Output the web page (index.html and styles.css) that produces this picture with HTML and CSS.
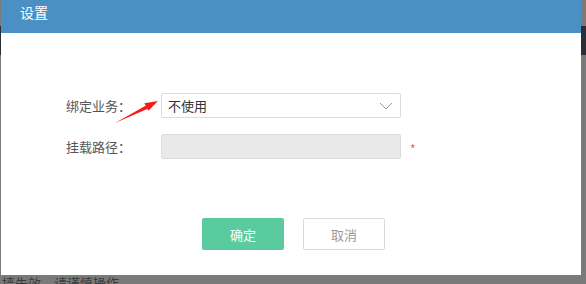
FILE: index.html
```html
<!DOCTYPE html>
<html lang="zh-CN">
<head>
    <meta charset="UTF-8">
    <title>设置</title>
    <link rel="stylesheet" href="styles.css">
</head>
<body>
    <!-- page behind the modal -->
    <div class="page">
        <div class="page-bar"></div>
        <p class="page-note">墙失效，请谨慎操作</p>
    </div>

    <div class="modal">
        <div class="modal-header">设置</div>
        <div class="modal-body">
            <div class="form-row">
                <label class="form-label">绑定业务：</label>
                <div class="select-box">
                    <span>不使用</span>
                    <svg class="chevron" width="14" height="8" viewBox="0 0 14 8">
                        <path d="M1 1 L7 7 L13 1" fill="none" stroke="#999" stroke-width="1"/>
                    </svg>
                </div>
                <svg class="arrow" width="50" height="30" viewBox="0 0 50 30">
                    <polygon points="3,26 34,8.6 35.8,11.8" fill="#f01e1e"/>
                    <polygon points="46,4 32.4,6.2 36.4,13.8" fill="#f01e1e"/>
                </svg>
            </div>
            <div class="form-row">
                <label class="form-label">挂载路径：</label>
                <div class="input-box disabled"></div>
                <span class="required">*</span>
            </div>
        </div>
        <div class="modal-footer">
            <button class="btn btn-ok">确定</button>
            <button class="btn btn-cancel">取消</button>
        </div>
    </div>
</body>
</html>
```

FILE: styles.css
```css
body {
    margin: 0;
    width: 586px;
    height: 284px;
    overflow: hidden;
    background-color: #7a7a7a;
    font-family: "Noto Sans CJK SC", "Liberation Sans", sans-serif;
    position: relative;
}

/* background page */
.page {
    height: 284px;
    display: flex;
    flex-direction: column;
}

.page-bar {
    margin-top: 26px;
    height: 29px;
    background-color: #2a2d33;
}

.page-note {
    margin: auto 0 0 0;
    padding-left: 2px;
    font-size: 13px;
    line-height: 16px;
    height: 9px;
    color: #3a3a3a;
}

/* Modal */
.modal {
    position: absolute;
    top: 0;
    left: 1px;
    width: 580px;
    height: 275px;
    background-color: #fff;
    display: flex;
    flex-direction: column;
}

.modal-header {
    height: 33px;
    background-color: #4a90c5;
    color: #fff;
    font-size: 14px;
    line-height: 25px;
    padding-left: 19px;
    box-sizing: border-box;
}

.modal-body {
    padding: 60px 0 0 65px;
    display: flex;
    flex-direction: column;
    gap: 16px;
}

.form-row {
    display: flex;
    align-items: center;
    position: relative;
}

.form-label {
    width: 95px;
    font-size: 13px;
    color: #555;
}

.select-box,
.input-box {
    width: 240px;
    height: 25px;
    box-sizing: border-box;
    border: 1px solid #dcdcdc;
    border-radius: 2px;
    display: flex;
    align-items: center;
    justify-content: space-between;
    padding: 0 7px 0 6px;
    font-size: 13px;
    color: #333;
}

.input-box.disabled {
    background-color: #e9e9e9;
}

.chevron {
    margin-top: 1px;
}

.arrow {
    position: absolute;
    left: 46px;
    top: 4px;
}

.required {
    color: #f05a5a;
    font-size: 12px;
    margin-left: 9px;
    margin-top: 4px;
}

.modal-footer {
    margin-top: 59px;
    display: flex;
    gap: 19px;
    padding-left: 201px;
}

.btn {
    width: 82px;
    height: 32px;
    font-family: inherit;
    font-size: 13px;
    border-radius: 2px;
    cursor: pointer;
}

.btn-ok {
    background-color: #5acb9e;
    border: none;
    color: #fff;
}

.btn-cancel {
    background-color: #fff;
    border: 1px solid #d9d9d9;
    color: #999;
}
```
